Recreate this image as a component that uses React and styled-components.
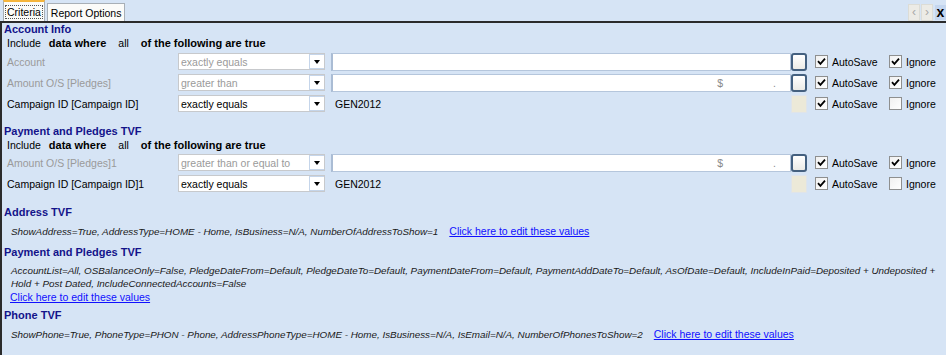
import styled, { createGlobalStyle, css } from "styled-components";

const GlobalStyle = createGlobalStyle`
  html, body {
    margin: 0;
    padding: 0;
    background: #d6e4f5;
  }
  body {
    font-family: "Liberation Sans", Arial, sans-serif;
    font-size: 10.5px;
    color: #000;
  }
`;

const Frame = styled.div`
  width: 946px;
  height: 355px;
  overflow: hidden;
  background: #d6e4f5;
  display: flex;
  flex-direction: column;
`;

const TabStrip = styled.div`
  height: 21px;
  flex: none;
  display: flex;
  align-items: flex-end;
  padding-left: 3px;
  border-bottom: 2px solid #2b2b2b;
`;

const Tab = styled.div`
  height: 17px;
  display: flex;
  align-items: center;
  padding: 0 3px;
  margin-right: 2px;
  background: #fbfbf9;
  border: 1px solid #a8afb6;
  border-bottom: none;
  color: #000;
  font-size: 10.5px;
  ${({ $active }) =>
    $active &&
    css`
      height: 19px;
      padding: 0 2px;
      border-top: 2px solid #f5b53c;
      span {
        outline: 1px dotted #555;
        padding: 0 1px;
      }
    `}
`;

const TabNav = styled.div`
  margin-left: auto;
  display: flex;
  align-items: center;
  align-self: center;
  gap: 1px;
  padding-top: 3px;
`;

const NavButton = styled.div`
  width: 10px;
  height: 15px;
  display: flex;
  align-items: center;
  justify-content: center;
  background: #ecebe6;
  border: 1px solid #dcdcd6;
  color: #a8a8a8;
  font-size: 12px;
`;

const CloseButton = styled.div`
  width: 11px;
  height: 15px;
  display: flex;
  align-items: center;
  justify-content: center;
  margin-left: 1px;
  background: #c4d6ef;
  font-weight: bold;
  font-size: 14px;
  color: #000;
`;

const Panel = styled.div`
  flex: 1;
  border-left: 2px solid #2b2b2b;
  padding: 0 0 0 2px;
  display: flex;
  flex-direction: column;
`;

const SectionTitle = styled.div`
  height: 13px;
  line-height: 13px;
  font-size: 11px;
  font-weight: bold;
  color: #13138a;
  margin-top: ${({ $top }) => $top || 0}px;
`;

const IncludeLine = styled.div`
  height: 13px;
  display: flex;
  align-items: center;
  padding-left: 3px;
  gap: 8px;
  b {
    font-size: 11px;
    font-weight: bold;
  }
  .all {
    margin: 0 4px;
  }
`;

const Rows = styled.div`
  display: flex;
  flex-direction: column;
  margin-top: ${({ $top }) => $top || 0}px;
`;

const Row = styled.div`
  height: 21px;
  display: grid;
  grid-template-columns: 171px 147px 466px 16px 82px 60px;
  align-items: center;
  padding-left: 3px;
`;

const Label = styled.div`
  color: ${({ $disabled }) => ($disabled ? "#9a9a9a" : "#000")};
  white-space: nowrap;
`;

const Select = styled.div`
  height: 17px;
  box-sizing: border-box;
  display: flex;
  align-items: center;
  background: #fff;
  border: 1px solid #c7c9cc;
  color: ${({ $disabled }) => ($disabled ? "#9a9a9a" : "#000")};
  padding-left: 2px;
  span {
    flex: 1;
    white-space: nowrap;
  }
`;

const DropButton = styled.div`
  width: 15px;
  height: 15px;
  flex: none;
  box-sizing: border-box;
  border: 1px solid #c5d5ea;
  border-right: none;
  display: flex;
  align-items: center;
  justify-content: center;
  &::after {
    content: "";
    border-left: 3px solid transparent;
    border-right: 3px solid transparent;
    border-top: 4px solid #000;
  }
`;

const Input = styled.div`
  margin-left: 6px;
  height: 18px;
  box-sizing: border-box;
  display: flex;
  align-items: center;
  padding-left: 4px;
  ${({ $plain }) =>
    $plain
      ? css`
          background: transparent;
        `
      : css`
          background: #fff;
          border: 1px solid #b5c6dc;
          border-left: 2px solid #aabcd4;
        `}
`;

const Money = styled.div`
  display: flex;
  width: 100%;
  justify-content: flex-end;
  color: #8a8a8a;
  span:first-child {
    margin-right: 50px;
  }
  span:last-child {
    margin-right: 14px;
  }
`;

const Square = styled.div`
  width: 16px;
  height: 18px;
  box-sizing: border-box;
  border-radius: 3px;
  ${({ $off }) =>
    $off
      ? css`
          background: #ece9d8;
          border: 1px solid #dfe4ea;
          border-radius: 0;
        `
      : css`
          background: linear-gradient(#ffffff, #ecebe6);
          border: 2px solid #44607f;
        `}
`;

const CheckWrap = styled.label`
  display: flex;
  align-items: center;
  gap: 4px;
  white-space: nowrap;
  padding-left: ${({ $pad }) => $pad || 0}px;
`;

const Box = styled.span`
  width: 13px;
  height: 13px;
  flex: none;
  box-sizing: border-box;
  border: 1px solid #8e8f8f;
  background: linear-gradient(135deg, #f0f0f0, #ffffff);
  display: inline-flex;
  align-items: center;
  justify-content: center;
`;

const TvfText = styled.div`
  font-style: italic;
  font-size: 9.85px;
  color: #1a1a1a;
  padding-left: 7px;
  white-space: nowrap;
  line-height: 13px;
  margin-top: ${({ $top }) => $top || 0}px;
`;

const Link = styled.a`
  color: #1010ff;
  text-decoration: underline;
  font-style: normal;
  font-size: 10.5px;
  cursor: pointer;
  margin-left: ${({ $left }) => $left || 0}px;
`;

const LinkLine = styled.div`
  padding-left: 6px;
  line-height: 13px;
  margin-top: ${({ $top }) => $top || 0}px;
`;

function Check({ checked }) {
  return (
    <Box>
      {checked && (
        <svg width="9" height="9" viewBox="0 0 9 9">
          <path d="M1 4.2 L3.4 6.8 L8 1.6" fill="none" stroke="#000" strokeWidth="1.8" />
        </svg>
      )}
    </Box>
  );
}

function CriteriaRow({ label, op, value, disabled, money, plain, ignore }) {
  return (
    <Row>
      <Label $disabled={disabled}>{label}</Label>
      <Select $disabled={disabled}>
        <span>{op}</span>
        <DropButton />
      </Select>
      <Input $plain={plain}>
        {money && (
          <Money>
            <span>$</span>
            <span>.</span>
          </Money>
        )}
        {value}
      </Input>
      <Square $off={plain} />
      <CheckWrap $pad={8}>
        <Check checked />
        AutoSave
      </CheckWrap>
      <CheckWrap>
        <Check checked={ignore} />
        Ignore
      </CheckWrap>
    </Row>
  );
}

function Include() {
  return (
    <IncludeLine>
      <span>Include</span>
      <b>data where</b>
      <span className="all">all</span>
      <b>of the following are true</b>
    </IncludeLine>
  );
}

export default function App() {
  return (
    <Frame>
      <GlobalStyle />
      <TabStrip>
        <Tab $active>
          <span>Criteria</span>
        </Tab>
        <Tab>Report Options</Tab>
        <TabNav>
          <NavButton>&lsaquo;</NavButton>
          <NavButton>&rsaquo;</NavButton>
          <CloseButton>x</CloseButton>
        </TabNav>
      </TabStrip>
      <Panel>
        <SectionTitle>Account Info</SectionTitle>
        <Include />
        <Rows $top={2}>
          <CriteriaRow label="Account" op="exactly equals" disabled ignore />
          <CriteriaRow label="Amount O/S [Pledges]" op="greater than" disabled money ignore />
          <CriteriaRow label="Campaign ID [Campaign ID]" op="exactly equals" value="GEN2012" plain />
        </Rows>

        <SectionTitle $top={11}>Payment and Pledges TVF</SectionTitle>
        <Include />
        <Rows $top={1}>
          <CriteriaRow label="Amount O/S [Pledges]1" op="greater than or equal to" disabled money ignore />
          <CriteriaRow label="Campaign ID [Campaign ID]1" op="exactly equals" value="GEN2012" plain />
        </Rows>

        <SectionTitle $top={12}>Address TVF</SectionTitle>
        <TvfText $top={6}>
          ShowAddress=True, AddressType=HOME - Home, IsBusiness=N/A, NumberOfAddressToShow=1
          <Link $left={11}>Click here to edit these values</Link>
        </TvfText>

        <SectionTitle $top={8}>Payment and Pledges TVF</SectionTitle>
        <TvfText $top={5}>
          AccountList=All, OSBalanceOnly=False, PledgeDateFrom=Default, PledgeDateTo=Default, PaymentDateFrom=Default,
          PaymentAddDateTo=Default, AsOfDate=Default, IncludeInPaid=Deposited + Undeposited +
          <br />
          Hold + Post Dated, IncludeConnectedAccounts=False
        </TvfText>
        <LinkLine $top={1}>
          <Link>Click here to edit these values</Link>
        </LinkLine>

        <SectionTitle $top={5}>Phone TVF</SectionTitle>
        <TvfText $top={6}>
          ShowPhone=True, PhoneType=PHON - Phone, AddressPhoneType=HOME - Home, IsBusiness=N/A, IsEmail=N/A, NumberOfPhonesToShow=2
          <Link $left={11}>Click here to edit these values</Link>
        </TvfText>
      </Panel>
    </Frame>
  );
}
